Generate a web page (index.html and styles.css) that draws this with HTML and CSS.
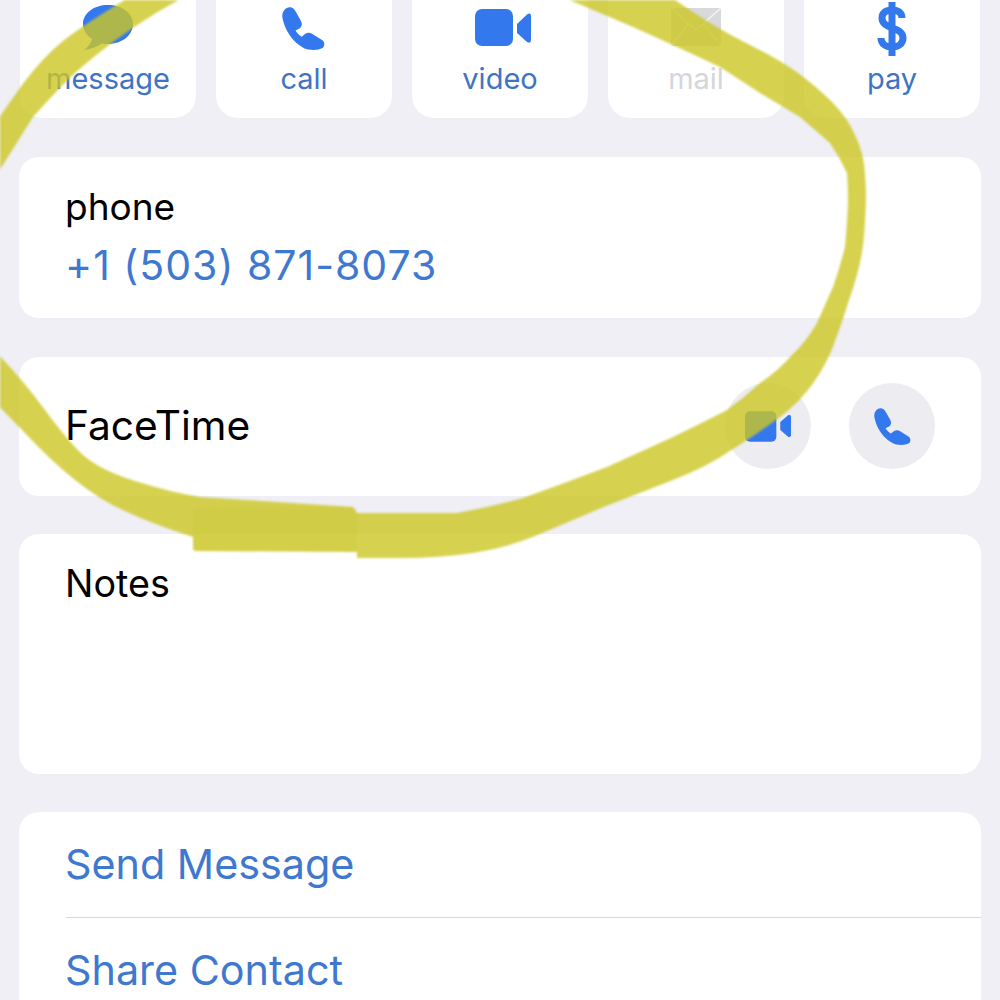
FILE: index.html
```html
<!DOCTYPE html>
<html lang="en">
<head>
<meta charset="utf-8">
<title>Contact</title>
<link rel="stylesheet" href="styles.css">
</head>
<body>
<main class="page">
  <section class="actions">
    <div class="action">
      <svg class="icon" viewBox="0 0 52 50"><path class="blue" d="M26 3C12 3 1 11 1 22c0 6 3 11 9 15-1 4-4 8-8 11 7-1 13-3 18-6.500 2 .4 4 .5 6 .5 14 0 25-9 25-20S40 3 26 3z"/></svg>
      <span class="label">message</span>
    </div>
    <div class="action">
      <svg class="icon" viewBox="0 0 52 50"><path class="blue" d="M4.300 14.700C4 9 8 5 12 5.300C15 5.300 17 8 18.700 11.300L23 19C24.500 22 24 25 21.500 26.500L17.500 28.500C19 31 21 33.500 23.700 34.700L27 32C29 30.500 32 30.500 34 31.700L44 38C47 40 47 44 44.500 46C41 48 36 48.500 30 47.500C20 45 7 32 4.300 14.700Z"/></svg>
      <span class="label">call</span>
    </div>
    <div class="action">
      <svg class="icon-wide" viewBox="0 0 58 50"><rect class="blue" x="4" y="7" width="38" height="37" rx="7"/><path class="blue" d="M46 22L56 12.500Q60 10 60 14V38Q60 42 56 40L46 31Z"/></svg>
      <span class="label">video</span>
    </div>
    <div class="action">
      <svg class="icon" viewBox="0 0 52 50"><path class="muted" d="M1 6h50v38H1z"/><path class="crease" d="M1 6l25 22L51 6M1 44l17-22M51 44L34 22"/></svg>
      <span class="label label-muted">mail</span>
    </div>
    <div class="action">
      <svg class="icon" viewBox="0 0 52 50"><path class="dollar" d="M36 16c0-5-4-8-10-8s-10 3-10 8c0 12 21 8 21 20 0 6-5 9-11 9s-11-3-11-9M26 0v54"/></svg>
      <span class="label">pay</span>
    </div>
  </section>

  <section class="card card-phone">
    <div class="title">phone</div>
    <div class="number">+1 (503) 871-8073</div>
  </section>

  <section class="card card-facetime">
    <div class="title title-large">FaceTime</div>
    <div class="round-buttons">
      <div class="round">
        <svg class="round-icon" viewBox="0 0 48 32"><rect class="blue" x="0" y="1" width="32" height="31" rx="5"/><path class="blue" d="M36 12l8-7c1.200-.8 3-.2 3 1.500v19c0 1.700-1.800 2.300-3 1.500l-8-7z"/></svg>
      </div>
      <div class="round">
        <svg class="round-icon-phone" viewBox="4 5 43 43"><path class="blue" d="M4.300 14.700C4 9 8 5 12 5.300C15 5.300 17 8 18.700 11.300L23 19C24.500 22 24 25 21.500 26.500L17.500 28.500C19 31 21 33.500 23.700 34.700L27 32C29 30.500 32 30.500 34 31.700L44 38C47 40 47 44 44.500 46C41 48 36 48.500 30 47.500C20 45 7 32 4.300 14.700Z"/></svg>
      </div>
    </div>
  </section>

  <section class="card card-notes">
    <div class="title title-notes">Notes</div>
  </section>

  <section class="card card-links">
    <div class="link">Send Message</div>
    <div class="divider"></div>
    <div class="link">Share Contact</div>
  </section>
</main>

<svg class="marker" viewBox="0 0 1000 1000" aria-hidden="true">
  <path class="ink" d="M128 -2 Q83 25 63 41 Q43 57 22 85 L-4 122 L-4 176 L33 117 Q60 87 76 72 Q93 57 113 42 Q133 27 156 13 L182 -2 Z"/>
  <path class="ink" d="M672 -2 L696 14 Q720 30 750 45 Q780 60 798 73 Q817 87 832 102 Q847 117 855 135 Q864 153 865 174 Q867 195 865 221 Q864 247 859 267 Q854 287 848 303 Q843 320 835 341 Q828 362 814 382 Q800 402 780 417 Q760 432 733 449 Q707 467 673 480 Q640 493 606 506 Q573 520 540 534 Q507 548 473 553 Q440 558 400 558 L357 558 L357 552 L196 551 Q193 551 193 548 L193 537 Q150 523 125 511 Q100 500 75 480 Q50 460 23 431 L-4 403 L-4 352 Q23 380 45 410 Q67 440 83 455 Q100 470 135 481 Q170 492 200 497 L353 507 L357 513 L457 513 Q490 507 523 498 Q565 483 607 467 Q640 452 673 437 Q700 424 727 410 Q745 397 760 383 Q778 371 791 356 Q806 342 817 323 Q825 305 833 287 Q840 267 845 247 Q847 225 848 203 Q848 188 847 173 Q840 158 830 143 Q815 130 800 117 Q780 105 760 93 Q740 80 720 67 Q680 48 633 27 L565 -2 Z"/>
  <path class="ink-patch" d="M196 508 L353 507 Q357 507 357 510 L357 549 Q357 552 353 552 L196 551 Q193 551 193 548 L193 511 Q193 508 196 508 Z"/>
</svg>
</body>
</html>
```
FILE: styles.css
```css
* { box-sizing: border-box; }
html, body { margin: 0; height: 1000px; overflow: hidden; }
body {
  background: #efeff5;
  font-family: Inter, "Noto Sans", "Liberation Sans", sans-serif;
  color: #000;
  position: relative;
}
.page {
  display: flex;
  flex-direction: column;
  padding: 0 19px;
  gap: 38px;
  height: 1000px;
  overflow: hidden;
}
.page > section { flex: none; }
.actions {
  display: grid;
  grid-template-columns: repeat(5, 176px);
  justify-content: space-between;
  margin: -22px 1px 1px;
  height: 140px;
}
.action {
  background: #fff;
  border-radius: 22px;
  display: flex;
  flex-direction: column;
  align-items: center;
  padding-top: 24px;
}
.icon { width: 52px; height: 50px; overflow: visible; }
.icon-wide { width: 58px; height: 50px; overflow: visible; }
.blue { fill: #3478ee; }
.muted { fill: #d9d9dc; }
.crease { fill: none; stroke: #f4f4f4; stroke-width: 1.500; }
.dollar { fill: none; stroke: #3478ee; stroke-width: 7; stroke-linecap: butt; }
.label {
  font-size: 29px;
  line-height: 34px;
  margin-top: 10px;
  color: #3f74c4;
}
.label-muted { color: #d5d6da; }
.card { background: #fff; border-radius: 20px; }
.card-phone { height: 161px; padding: 27px 46px 0; margin-bottom: 1px; }
.title { font-size: 37px; line-height: 46px; }
.number {
  font-size: 41px;
  line-height: 50px;
  letter-spacing: 1px;
  margin-top: 10px;
  color: #3f78cf;
}
.card-facetime {
  height: 139px;
  padding: 0 46px 1px 46px;
  display: flex;
  align-items: center;
  justify-content: space-between;
}
.title-large { font-size: 40.700px; }
.round-buttons { display: flex; gap: 38px; }
.round {
  width: 86px;
  height: 86px;
  border-radius: 50%;
  background: #ededf1;
  display: flex;
  align-items: center;
  justify-content: center;
}
.round-icon { width: 47px; height: 32px; overflow: visible; }
.round-icon-phone { width: 37px; height: 37px; overflow: visible; }
.card-notes { height: 240px; padding: 26px 46px 0; }
.title-notes { font-size: 37.700px; }
.card-links {
  height: 188px;
  padding: 27px 0 0 46px;
  border-radius: 20px 20px 0 0;
}
.link { font-size: 41.300px; line-height: 50px; color: #3f78cf; }
.divider { height: 1px; background: #d8d8dc; margin: 28px 0 27px 1px; }
.marker {
  position: absolute;
  left: 0;
  top: 0;
  width: 1000px;
  height: 1000px;
  pointer-events: none;
  filter: blur(1px);
}
.ink { fill: #ccc723; opacity: .8; }
.ink-patch { fill: #b8b000; opacity: .08; }
```
